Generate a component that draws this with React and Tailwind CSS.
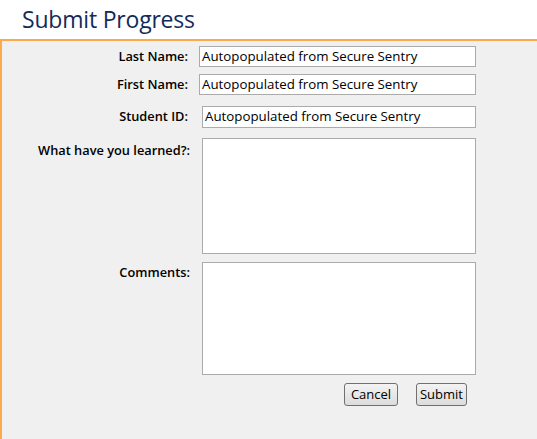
const fields = [
    { label: "Last Name:", mt: "mt-[5px]", box: "ml-[11px] w-[277px] h-[21px]" },
    { label: "First Name:", mt: "mt-[7px]", box: "ml-[11px] w-[277px] h-[21px]" },
    { label: "Student ID:", mt: "mt-[11px]", box: "ml-[14px] w-[274px] h-[22px]" },
];

const App = () => {
    return (
        <div className="w-[537px] h-[439px] flex flex-col bg-white font-['Open_Sans',sans-serif]">
            {/* Title */}
            <div className="h-[39px] shrink-0 pl-[22px] pt-[5px]">
                <h1 className="text-[23px] leading-[28px] text-[#132b5b] tracking-[-0.2px]">Submit Progress</h1>
            </div>

            {/* Form panel */}
            <div className="flex-1 bg-[#f0f0f0] border-t-2 border-l-2 border-[#fcab4b] flex flex-col">
                {fields.map((f) => (
                    <div key={f.label} className={`flex items-center ${f.mt}`}>
                        <label className="w-[186px] text-right text-[12.8px] font-semibold text-black">
                            {f.label}
                        </label>
                        <div className={`${f.box} bg-white border border-[#ababab] flex items-center pl-[2px] text-[13.3px] text-black whitespace-nowrap overflow-hidden`}>
                            Autopopulated from Secure Sentry
                        </div>
                    </div>
                ))}

                <div className="flex mt-[10px]">
                    <label className="w-[188px] text-right text-[12.8px] font-semibold text-black pt-[3px]">
                        What have you learned?:
                    </label>
                    <div className="ml-[12px] w-[274px] h-[116px] bg-white border border-[#ababab]" />
                </div>

                <div className="flex mt-[8px]">
                    <label className="w-[188px] text-right text-[12.8px] font-semibold text-black pt-[1px]">
                        Comments:
                    </label>
                    <div className="ml-[12px] w-[274px] h-[113px] bg-white border border-[#ababab]" />
                </div>

                <div className="flex mt-[8px] pl-[342px] gap-[18px]">
                    <button className="w-[54px] h-[23px] rounded-[3px] border border-[#707070] bg-gradient-to-b from-[#f3f3f3] to-[#dcdcdc] text-[13px] text-black leading-none">
                        Cancel
                    </button>
                    <button className="w-[51px] h-[23px] rounded-[3px] border border-[#707070] bg-gradient-to-b from-[#f3f3f3] to-[#dcdcdc] text-[13px] text-black leading-none">
                        Submit
                    </button>
                </div>
            </div>
        </div>
    );
};

export default App;
